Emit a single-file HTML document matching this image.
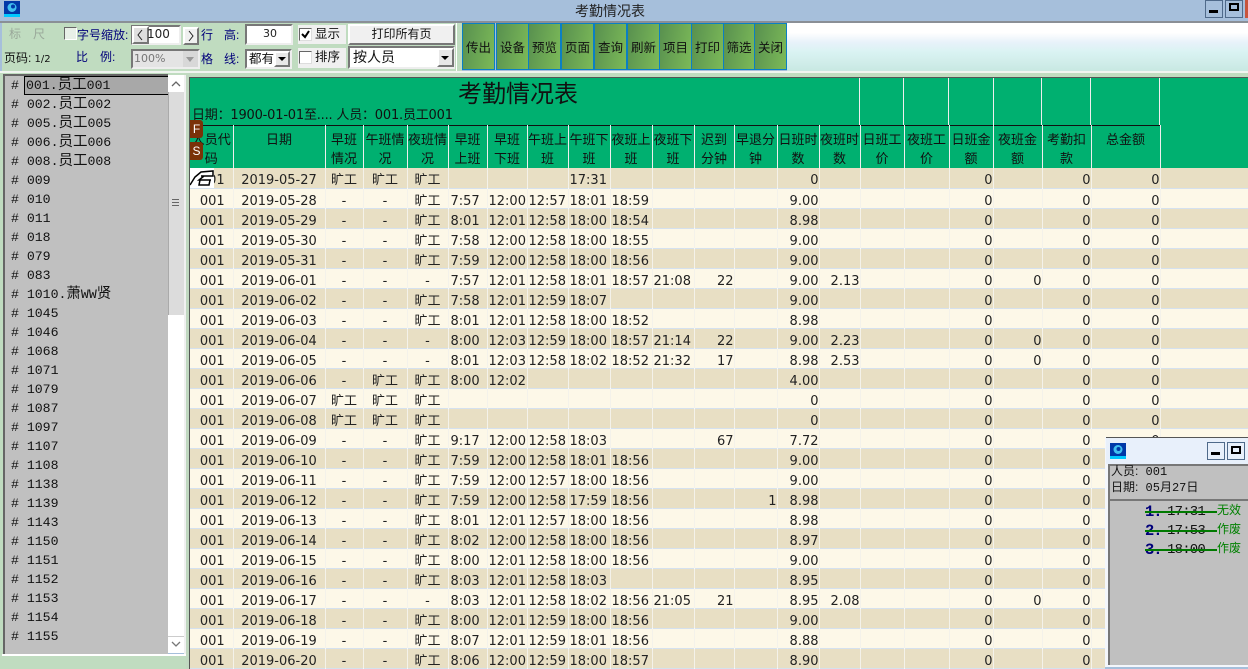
<!DOCTYPE html>
<html lang="zh">
<head>
<meta charset="utf-8">
<title>考勤情况表</title>
<style>
*{box-sizing:border-box}
html,body{margin:0;padding:0}
body{width:1248px;height:669px;overflow:hidden;position:relative;background:#a6bfdb;font-family:"DejaVu Sans","Noto Sans CJK SC",sans-serif;color:#111}
.a{position:absolute;white-space:nowrap}
.cj{font-family:"Liberation Sans","Noto Sans CJK SC",sans-serif}
.navy{color:#00007a}
.win{background:#a6bfdb;border:1px solid #4f6a8a;width:18px;height:18px}
.btn{position:absolute;top:23px;height:47px;padding-bottom:1px;background:linear-gradient(100deg,#58904f,#7cba58);border:1px solid #0a7fc4;display:flex;align-items:center;justify-content:center;font:12.5px "Liberation Sans","Noto Sans CJK SC",sans-serif;color:#111}
.sunk{position:absolute;background:#fff;border:2px solid;border-color:#777 #eee #eee #777}
.raised{position:absolute;background:#f0f0f0;border:2px solid;border-color:#fff #777 #777 #fff}
#list{position:absolute;left:3px;top:74px;width:165px;height:580px;background:#c0c0c0;border-left:2px solid #666;border-top:2px solid #666;overflow:hidden}
#list div{position:absolute;left:0;height:19px;font:13.2px/20px "Liberation Mono","Noto Sans CJK SC",monospace;white-space:pre;padding-left:6px;color:#111}
#list span{font-size:14.5px;line-height:0;font-family:"Noto Sans CJK SC",sans-serif}
table{border-collapse:collapse;table-layout:fixed;position:absolute;left:190px;width:1058px}
#head{top:125px;height:43px}
#head td{height:43px;background:#00b070;border-top:1px solid #111;border-right:1px solid #eee;text-align:center;vertical-align:top;padding:4px 0 0;font:13px/19px "Liberation Sans","Noto Sans CJK SC",sans-serif;color:#111;overflow:hidden;white-space:nowrap}
#head td:last-child{border:0}
#data{top:168px;font-size:13px}
#data td{height:20px;padding:7px 0 0;border-right:1px solid #f4f2ea;border-bottom:1px solid #fff8;text-align:center;white-space:nowrap;overflow:hidden;color:#222;line-height:12px;font-family:"DejaVu Sans","Noto Sans CJK SC",sans-serif}
#data tr:nth-child(odd) td{background:#e8dfc4}
#data tr:nth-child(even) td{background:#fdf8e8}
#data td:first-child{padding-left:2px}
#data td:nth-child(n+7):nth-child(-n+11){text-align:left;padding-left:1px}
#data td:nth-child(6){text-align:left;padding-left:2px}
#data td:nth-child(n+12){text-align:right;padding-right:0}
#data td:last-child{border-right:0}
.vl{position:absolute;top:78px;width:1px;height:47px;background:#eee}
.num{position:absolute;left:1145px;font:bold 15.5px/18px "Liberation Mono",monospace;color:#00007a;letter-spacing:-1px}
.tm{position:absolute;left:1167px;font:14px/18px "Liberation Mono",monospace;color:#111;letter-spacing:-.8px}
</style>
</head>
<body>
<!-- title bar -->
<div class="a" style="left:0;top:0;width:1248px;height:22px;background:#a6bfdb"></div>
<svg class="a" style="left:4px;top:1px" width="16" height="16" viewBox="0 0 16 16"><rect width="16" height="16" fill="#0038a8"/><rect y="13" width="16" height="3" fill="#00c8ff"/><circle cx="8" cy="6.5" r="4.5" fill="#40c0f0"/><circle cx="9" cy="5.5" r="2" fill="#0038a8"/></svg>
<div class="a cj" style="left:575px;top:1px;font-size:14px;line-height:20px;color:#222">考勤情况表</div>
<div class="a win" style="left:1205px;top:0"><div style="position:absolute;left:3px;top:9px;width:9px;height:3px;background:#000"></div></div>
<div class="a win" style="left:1225px;top:0"><div style="position:absolute;left:3px;top:2px;width:10px;height:8px;border:2px solid #000"></div></div>
<div class="a" style="left:1245px;top:0;width:3px;height:18px;background:#c8553d"></div>

<!-- toolbar -->
<div class="a" style="left:0;top:21px;width:1248px;height:2px;background:#8a8f96"></div>
<div class="a" style="left:2px;top:23px;width:454px;height:48px;background:#c0dcc0"></div>
<div class="a" style="left:456px;top:23px;width:6px;height:48px;background:#c0dcc0;border-left:1px solid #fff"></div>
<div class="a" style="left:787px;top:23px;width:461px;height:48px;background:linear-gradient(180deg,#fff 0%,#fff 20%,#e8f2fa 40%,#daf3f3 60%,#c8e8e2 100%)"></div>
<div class="a" style="left:0;top:71px;width:1248px;height:2px;background:#f0f5f0"></div>
<div class="a" style="left:0;top:73px;width:1248px;height:4px;background:#c0dcc0"></div>

<div class="a cj" style="left:9px;top:26px;font-size:12px;line-height:16px;color:#9aa89a">标</div>
<div class="a cj" style="left:33px;top:26px;font-size:12px;line-height:16px;color:#9aa89a">尺</div>
<div class="a" style="left:64px;top:27px;width:13px;height:13px;background:#e8f0e8;border:1px solid;border-color:#666 #fff #fff #666"></div>
<div class="a cj navy" style="left:77px;top:27px;font-size:12px;line-height:17px">字号缩放:</div>
<div class="sunk" style="left:131px;top:25px;width:50px;height:20px"></div>
<div class="raised" style="left:132px;top:26px;width:17px;height:18px;background:#e0e0e0"><svg width="13" height="14" style="display:block"><path d="M8 2 L4 7 L8 12" fill="none" stroke="#222" stroke-width="1"/></svg></div>
<div class="a" style="left:147px;top:26px;font:12px/17px 'DejaVu Sans',sans-serif;color:#222">100</div>
<div class="raised" style="left:183px;top:27px;width:16px;height:18px"><svg width="12" height="14" style="display:block"><path d="M4 2 L8 7 L4 12" fill="none" stroke="#222" stroke-width="1"/></svg></div>
<div class="a cj navy" style="left:201px;top:27px;font-size:12px;line-height:17px">行</div>
<div class="a cj navy" style="left:224px;top:27px;font-size:12px;line-height:17px">高:</div>
<div class="sunk" style="left:245px;top:24px;width:48px;height:21px"></div>
<div class="a" style="left:263px;top:25px;font:11px/17px 'DejaVu Sans',sans-serif;color:#222">30</div>
<div class="a" style="left:298px;top:25px;width:48px;height:19px;background:#f0f0f0"></div>
<div class="a" style="left:299px;top:28px;width:13px;height:13px;background:#fff;border:1px solid;border-color:#666 #ddd #ddd #666"><svg width="11" height="11" style="display:block"><path d="M2 5 L5 8 L9 2" fill="none" stroke="#000" stroke-width="2"/></svg></div>
<div class="a cj" style="left:315px;top:26px;font-size:12.5px;line-height:17px">显示</div>
<div class="raised" style="left:348px;top:24px;width:107px;height:21px;font:12px/17px 'Liberation Sans','Noto Sans CJK SC',sans-serif;text-align:center">打印所有页</div>

<div class="a" style="left:4px;top:50px;font:12px/17px 'Liberation Sans','Noto Sans CJK SC',sans-serif">页码:<span style="font-family:'DejaVu Sans';font-size:10px"> 1/2</span></div>
<div class="a cj navy" style="left:76px;top:49px;font-size:12px;line-height:17px">比</div>
<div class="a cj navy" style="left:100px;top:49px;font-size:12px;line-height:17px">例:</div>
<div class="a" style="left:131px;top:49px;width:69px;height:20px;background:#e4e4e4;border:2px solid;border-color:#777 #eee #eee #777;font:11px/16px 'DejaVu Sans',sans-serif;color:#777;padding-left:1px">100%</div>
<div class="a" style="left:183px;top:51px;width:15px;height:16px;background:#d8d8d8"></div>
<div class="a" style="left:186px;top:57px;border:4px solid transparent;border-top:5px solid #999"></div>
<div class="a cj navy" style="left:201px;top:51px;font-size:12px;line-height:17px">格</div>
<div class="a cj navy" style="left:224px;top:51px;font-size:12px;line-height:17px">线:</div>
<div class="sunk" style="left:245px;top:49px;width:47px;height:20px;font:12.5px/16px 'Liberation Sans','Noto Sans CJK SC',sans-serif;padding-left:2px">都有</div>
<div class="raised" style="left:274px;top:51px;width:16px;height:16px;background:#e8e8e8"></div>
<div class="a" style="left:278px;top:57px;border:4px solid transparent;border-top:4px solid #000"></div>
<div class="a" style="left:298px;top:48px;width:48px;height:20px;background:#f0f0f0"></div>
<div class="a" style="left:299px;top:51px;width:13px;height:13px;background:#fff;border:1px solid;border-color:#666 #ddd #ddd #666"></div>
<div class="a cj" style="left:315px;top:49px;font-size:12.5px;line-height:17px">排序</div>
<div class="sunk" style="left:348px;top:46px;width:107px;height:23px;font:14px/19px 'Liberation Sans','Noto Sans CJK SC',sans-serif;padding-left:3px">按人员</div>
<div class="raised" style="left:437px;top:48px;width:17px;height:19px;background:#e8e8e8"></div>
<div class="a" style="left:441px;top:56px;border:4px solid transparent;border-top:4px solid #000"></div>

<div class="btn" style="left:462px;width:33px">传出</div>
<div class="btn" style="left:496px;width:33px">设备</div>
<div class="btn" style="left:528px;width:33px">预览</div>
<div class="btn" style="left:561px;width:33px">页面</div>
<div class="btn" style="left:594px;width:33px">查询</div>
<div class="btn" style="left:627px;width:33px">刷新</div>
<div class="btn" style="left:659px;width:33px">项目</div>
<div class="btn" style="left:691px;width:33px">打印</div>
<div class="btn" style="left:723px;width:32px">筛选</div>
<div class="btn" style="left:754px;width:33px">关闭</div>

<!-- left list -->
<div class="a" style="left:0;top:73px;width:3px;height:596px;background:#c0dcc0"></div>
<div class="a" style="left:2px;top:654px;width:187px;height:15px;background:#c0dcc0;border-top:2px solid #fff"></div>
<div id="list">
<div style="top:0">#</div>
<div style="top:0;left:19px;width:146px;height:19px;background:#a8a8a8;border:1px solid #000;padding-left:1px;line-height:18px">001.<span>员工</span>001</div>
<div style="top:19px"># 002.<span>员工</span>002</div>
<div style="top:38px"># 005.<span>员工</span>005</div>
<div style="top:57px"># 006.<span>员工</span>006</div>
<div style="top:76px"># 008.<span>员工</span>008</div>
<div style="top:95px"># 009</div>
<div style="top:114px"># 010</div>
<div style="top:133px"># 011</div>
<div style="top:152px"># 018</div>
<div style="top:171px"># 079</div>
<div style="top:190px"># 083</div>
<div style="top:209px"># 1010.<span>萧</span>WW<span>贤</span></div>
<div style="top:228px"># 1045</div>
<div style="top:247px"># 1046</div>
<div style="top:266px"># 1068</div>
<div style="top:285px"># 1071</div>
<div style="top:304px"># 1079</div>
<div style="top:323px"># 1087</div>
<div style="top:342px"># 1097</div>
<div style="top:361px"># 1107</div>
<div style="top:380px"># 1108</div>
<div style="top:399px"># 1138</div>
<div style="top:418px"># 1139</div>
<div style="top:437px"># 1143</div>
<div style="top:456px"># 1150</div>
<div style="top:475px"># 1151</div>
<div style="top:494px"># 1152</div>
<div style="top:513px"># 1153</div>
<div style="top:532px"># 1154</div>
<div style="top:551px"># 1155</div>
</div>
<!-- scrollbar -->
<div class="a" style="left:168px;top:75px;width:16px;height:578px;background:#fff"></div>
<div class="a" style="left:168px;top:92px;width:16px;height:223px;background:#dcdcdc;border-left:1px solid #aaa"></div>
<div class="a" style="left:168px;top:636px;width:16px;height:17px;background:#fff;border-top:1px solid #ccc"></div>
<svg class="a" style="left:171px;top:80px" width="10" height="8"><path d="M1 6 L5 2 L9 6" fill="none" stroke="#666" stroke-width="1.3"/></svg>
<svg class="a" style="left:171px;top:640px" width="10" height="8"><path d="M1 2 L5 6 L9 2" fill="none" stroke="#777" stroke-width="1.3"/></svg>
<div class="a" style="left:172px;top:199px;width:7px;height:7px;border-top:1px solid #666;border-bottom:1px solid #666"><div style="margin-top:2px;height:1px;background:#666"></div></div>
<div class="a" style="left:184px;top:75px;width:2px;height:579px;background:#f0f0f0"></div>
<div class="a" style="left:186px;top:73px;width:4px;height:596px;background:#c0d8c0"></div>
<div class="a" style="left:189px;top:77px;width:1px;height:592px;background:#555"></div>

<!-- report header -->
<div class="a" style="left:190px;top:77px;width:1058px;height:91px;background:#00b070;border-top:1px solid #555"></div>
<div class="a cj" style="left:458px;top:79px;font-size:24px;line-height:32px;color:#111">考勤情况表</div>
<div class="a" style="left:192px;top:107px;font-family:'DejaVu Sans','Noto Sans CJK SC',sans-serif;font-size:13px;letter-spacing:-.2px;line-height:18px;color:#111">日期：1900-01-01至.... 人员：001.员工001</div>
<div class="vl" style="left:859px"></div>
<div class="vl" style="left:903px"></div>
<div class="vl" style="left:948px"></div>
<div class="vl" style="left:993px"></div>
<div class="vl" style="left:1041px"></div>
<div class="vl" style="left:1090px"></div>
<div class="vl" style="left:1159px"></div>

<table id="head">
<colgroup><col style="width:43px"><col style="width:92px"><col style="width:38px"><col style="width:44px"><col style="width:41px"><col style="width:39px"><col style="width:40px"><col style="width:41px"><col style="width:42px"><col style="width:42px"><col style="width:42px"><col style="width:40px"><col style="width:43px"><col style="width:42px"><col style="width:41px"><col style="width:44px"><col style="width:45px"><col style="width:44px"><col style="width:49px"><col style="width:49px"><col style="width:69px"><col></colgroup>
<tr><td>人员代<br>码</td><td>日期</td><td>早班<br>情况</td><td>午班情<br>况</td><td>夜班情<br>况</td><td>早班<br>上班</td><td>早班<br>下班</td><td>午班上<br>班</td><td>午班下<br>班</td><td>夜班上<br>班</td><td>夜班下<br>班</td><td>迟到<br>分钟</td><td>早退分<br>钟</td><td>日班时<br>数</td><td>夜班时<br>数</td><td>日班工<br>价</td><td>夜班工<br>价</td><td>日班金<br>额</td><td>夜班金<br>额</td><td>考勤扣<br>款</td><td>总金额</td><td style="border-top:0"></td></tr>
</table>

<table id="data">
<colgroup><col style="width:43px"><col style="width:92px"><col style="width:38px"><col style="width:44px"><col style="width:41px"><col style="width:39px"><col style="width:40px"><col style="width:41px"><col style="width:42px"><col style="width:42px"><col style="width:42px"><col style="width:40px"><col style="width:43px"><col style="width:42px"><col style="width:41px"><col style="width:44px"><col style="width:45px"><col style="width:44px"><col style="width:49px"><col style="width:49px"><col style="width:69px"><col></colgroup>
<tr><td>001</td><td>2019-05-27</td><td>旷工</td><td>旷工</td><td>旷工</td><td></td><td></td><td></td><td>17:31</td><td></td><td></td><td></td><td></td><td>0</td><td></td><td></td><td></td><td>0</td><td></td><td>0</td><td>0</td><td></td></tr>
<tr><td>001</td><td>2019-05-28</td><td>-</td><td>-</td><td>旷工</td><td>7:57</td><td>12:00</td><td>12:57</td><td>18:01</td><td>18:59</td><td></td><td></td><td></td><td>9.00</td><td></td><td></td><td></td><td>0</td><td></td><td>0</td><td>0</td><td></td></tr>
<tr><td>001</td><td>2019-05-29</td><td>-</td><td>-</td><td>旷工</td><td>8:01</td><td>12:01</td><td>12:58</td><td>18:00</td><td>18:54</td><td></td><td></td><td></td><td>8.98</td><td></td><td></td><td></td><td>0</td><td></td><td>0</td><td>0</td><td></td></tr>
<tr><td>001</td><td>2019-05-30</td><td>-</td><td>-</td><td>旷工</td><td>7:58</td><td>12:00</td><td>12:58</td><td>18:00</td><td>18:55</td><td></td><td></td><td></td><td>9.00</td><td></td><td></td><td></td><td>0</td><td></td><td>0</td><td>0</td><td></td></tr>
<tr><td>001</td><td>2019-05-31</td><td>-</td><td>-</td><td>旷工</td><td>7:59</td><td>12:00</td><td>12:58</td><td>18:00</td><td>18:56</td><td></td><td></td><td></td><td>9.00</td><td></td><td></td><td></td><td>0</td><td></td><td>0</td><td>0</td><td></td></tr>
<tr><td>001</td><td>2019-06-01</td><td>-</td><td>-</td><td>-</td><td>7:57</td><td>12:01</td><td>12:58</td><td>18:01</td><td>18:57</td><td>21:08</td><td>22</td><td></td><td>9.00</td><td>2.13</td><td></td><td></td><td>0</td><td>0</td><td>0</td><td>0</td><td></td></tr>
<tr><td>001</td><td>2019-06-02</td><td>-</td><td>-</td><td>旷工</td><td>7:58</td><td>12:01</td><td>12:59</td><td>18:07</td><td></td><td></td><td></td><td></td><td>9.00</td><td></td><td></td><td></td><td>0</td><td></td><td>0</td><td>0</td><td></td></tr>
<tr><td>001</td><td>2019-06-03</td><td>-</td><td>-</td><td>旷工</td><td>8:01</td><td>12:01</td><td>12:58</td><td>18:00</td><td>18:52</td><td></td><td></td><td></td><td>8.98</td><td></td><td></td><td></td><td>0</td><td></td><td>0</td><td>0</td><td></td></tr>
<tr><td>001</td><td>2019-06-04</td><td>-</td><td>-</td><td>-</td><td>8:00</td><td>12:03</td><td>12:59</td><td>18:00</td><td>18:57</td><td>21:14</td><td>22</td><td></td><td>9.00</td><td>2.23</td><td></td><td></td><td>0</td><td>0</td><td>0</td><td>0</td><td></td></tr>
<tr><td>001</td><td>2019-06-05</td><td>-</td><td>-</td><td>-</td><td>8:01</td><td>12:03</td><td>12:58</td><td>18:02</td><td>18:52</td><td>21:32</td><td>17</td><td></td><td>8.98</td><td>2.53</td><td></td><td></td><td>0</td><td>0</td><td>0</td><td>0</td><td></td></tr>
<tr><td>001</td><td>2019-06-06</td><td>-</td><td>旷工</td><td>旷工</td><td>8:00</td><td>12:02</td><td></td><td></td><td></td><td></td><td></td><td></td><td>4.00</td><td></td><td></td><td></td><td>0</td><td></td><td>0</td><td>0</td><td></td></tr>
<tr><td>001</td><td>2019-06-07</td><td>旷工</td><td>旷工</td><td>旷工</td><td></td><td></td><td></td><td></td><td></td><td></td><td></td><td></td><td>0</td><td></td><td></td><td></td><td>0</td><td></td><td>0</td><td>0</td><td></td></tr>
<tr><td>001</td><td>2019-06-08</td><td>旷工</td><td>旷工</td><td>旷工</td><td></td><td></td><td></td><td></td><td></td><td></td><td></td><td></td><td>0</td><td></td><td></td><td></td><td>0</td><td></td><td>0</td><td>0</td><td></td></tr>
<tr><td>001</td><td>2019-06-09</td><td>-</td><td>-</td><td>旷工</td><td>9:17</td><td>12:00</td><td>12:58</td><td>18:03</td><td></td><td></td><td>67</td><td></td><td>7.72</td><td></td><td></td><td></td><td>0</td><td></td><td>0</td><td>0</td><td></td></tr>
<tr><td>001</td><td>2019-06-10</td><td>-</td><td>-</td><td>旷工</td><td>7:59</td><td>12:00</td><td>12:58</td><td>18:01</td><td>18:56</td><td></td><td></td><td></td><td>9.00</td><td></td><td></td><td></td><td>0</td><td></td><td>0</td><td>0</td><td></td></tr>
<tr><td>001</td><td>2019-06-11</td><td>-</td><td>-</td><td>旷工</td><td>7:59</td><td>12:00</td><td>12:57</td><td>18:00</td><td>18:56</td><td></td><td></td><td></td><td>9.00</td><td></td><td></td><td></td><td>0</td><td></td><td>0</td><td>0</td><td></td></tr>
<tr><td>001</td><td>2019-06-12</td><td>-</td><td>-</td><td>旷工</td><td>7:59</td><td>12:00</td><td>12:58</td><td>17:59</td><td>18:56</td><td></td><td></td><td>1</td><td>8.98</td><td></td><td></td><td></td><td>0</td><td></td><td>0</td><td>0</td><td></td></tr>
<tr><td>001</td><td>2019-06-13</td><td>-</td><td>-</td><td>旷工</td><td>8:01</td><td>12:01</td><td>12:57</td><td>18:00</td><td>18:56</td><td></td><td></td><td></td><td>8.98</td><td></td><td></td><td></td><td>0</td><td></td><td>0</td><td>0</td><td></td></tr>
<tr><td>001</td><td>2019-06-14</td><td>-</td><td>-</td><td>旷工</td><td>8:02</td><td>12:00</td><td>12:58</td><td>18:00</td><td>18:56</td><td></td><td></td><td></td><td>8.97</td><td></td><td></td><td></td><td>0</td><td></td><td>0</td><td>0</td><td></td></tr>
<tr><td>001</td><td>2019-06-15</td><td>-</td><td>-</td><td>旷工</td><td>8:00</td><td>12:01</td><td>12:58</td><td>18:00</td><td>18:56</td><td></td><td></td><td></td><td>9.00</td><td></td><td></td><td></td><td>0</td><td></td><td>0</td><td>0</td><td></td></tr>
<tr><td>001</td><td>2019-06-16</td><td>-</td><td>-</td><td>旷工</td><td>8:03</td><td>12:01</td><td>12:58</td><td>18:03</td><td></td><td></td><td></td><td></td><td>8.95</td><td></td><td></td><td></td><td>0</td><td></td><td>0</td><td>0</td><td></td></tr>
<tr><td>001</td><td>2019-06-17</td><td>-</td><td>-</td><td>-</td><td>8:03</td><td>12:01</td><td>12:58</td><td>18:02</td><td>18:56</td><td>21:05</td><td>21</td><td></td><td>8.95</td><td>2.08</td><td></td><td></td><td>0</td><td>0</td><td>0</td><td>0</td><td></td></tr>
<tr><td>001</td><td>2019-06-18</td><td>-</td><td>-</td><td>旷工</td><td>8:00</td><td>12:01</td><td>12:59</td><td>18:00</td><td>18:56</td><td></td><td></td><td></td><td>9.00</td><td></td><td></td><td></td><td>0</td><td></td><td>0</td><td>0</td><td></td></tr>
<tr><td>001</td><td>2019-06-19</td><td>-</td><td>-</td><td>旷工</td><td>8:07</td><td>12:01</td><td>12:59</td><td>18:01</td><td>18:56</td><td></td><td></td><td></td><td>8.88</td><td></td><td></td><td></td><td>0</td><td></td><td>0</td><td>0</td><td></td></tr>
<tr><td>001</td><td>2019-06-20</td><td>-</td><td>-</td><td>旷工</td><td>8:06</td><td>12:00</td><td>12:59</td><td>18:00</td><td>18:57</td><td></td><td></td><td></td><td>8.90</td><td></td><td></td><td></td><td>0</td><td></td><td>0</td><td>0</td><td></td></tr>
</table>

<!-- F / S badges and hand cursor -->
<div class="a" style="left:190px;top:120px;width:13px;height:18px;background:#7a3208;border-radius:0 3px 3px 0;color:#fff;font:12px/18px 'Liberation Sans',sans-serif;text-align:center">F</div>
<div class="a" style="left:190px;top:142px;width:13px;height:18px;background:#7a3208;border-radius:0 3px 3px 0;color:#fff;font:12px/18px 'Liberation Sans',sans-serif;text-align:center">S</div>
<div class="a" style="left:190px;top:168px;width:24px;height:20px;background:#fff"></div>
<svg class="a" style="left:190px;top:168px" width="24" height="20" viewBox="0 0 24 20"><path d="M0 17 L5 9 L11 4 L23 3 L23 8 L11 8 M14 8 L9 12 L21 12 M10 12 L9 17 L19 17 L20 12" fill="none" stroke="#000" stroke-width="1.5"/></svg>

<!-- popup -->
<div class="a" style="left:1105px;top:437px;width:143px;height:232px;background:#f4f7fc"></div>
<div class="a" style="left:1106px;top:437px;width:142px;height:1px;background:#555"></div>
<div class="a" style="left:1106px;top:438px;width:142px;height:26px;background:#e8f0fb"></div>
<svg class="a" style="left:1110px;top:443px" width="16" height="16" viewBox="0 0 16 16"><rect width="16" height="16" fill="#0038a8"/><rect y="13" width="16" height="3" fill="#00c8ff"/><circle cx="8" cy="6.5" r="4.5" fill="#40c0f0"/><circle cx="8.5" cy="6" r="2" fill="#0038a8"/></svg>
<div class="a win" style="left:1207px;top:442px;background:#e8f0fb"><div style="position:absolute;left:3px;top:9px;width:9px;height:3px;background:#000"></div></div>
<div class="a win" style="left:1227px;top:442px;background:#e8f0fb"><div style="position:absolute;left:3px;top:3px;width:10px;height:8px;border:2px solid #000"></div></div>
<div class="a" style="left:1108px;top:464px;width:140px;height:201px;background:#c0c0c0;border:2px solid #777;border-right:0;border-bottom:0"></div>
<div class="a" style="left:1111px;top:463px;font:12px/17px 'Liberation Mono','Noto Sans CJK SC',monospace;color:#111"><span class="cj">人员:</span> 001</div>
<div class="a" style="left:1111px;top:479px;font:12px/17px 'Liberation Mono','Noto Sans CJK SC',monospace;color:#111"><span class="cj">日期:</span> 05月27日</div>
<div class="a" style="left:1110px;top:499px;width:138px;height:2px;background:#777"></div>
<div class="num" style="top:503px">1.</div><div class="tm" style="top:503px">17:31</div>
<div class="num" style="top:522px">2.</div><div class="tm" style="top:522px">17:53</div>
<div class="num" style="top:541px">3.</div><div class="tm" style="top:541px">18:00</div>
<div class="a" style="left:1145px;top:511px;width:72px;height:2px;background:#007a00"></div>
<div class="a" style="left:1145px;top:530px;width:72px;height:2px;background:#007a00"></div>
<div class="a" style="left:1145px;top:549px;width:72px;height:2px;background:#007a00"></div>
<div class="a cj" style="left:1217px;top:502px;font-size:12px;line-height:17px;color:#008000">无效</div>
<div class="a cj" style="left:1217px;top:521px;font-size:12px;line-height:17px;color:#008000">作废</div>
<div class="a cj" style="left:1217px;top:540px;font-size:12px;line-height:17px;color:#008000">作废</div>
<div class="a" style="left:1105px;top:667px;width:143px;height:2px;background:#a6bfdb"></div>
</body>
</html>
